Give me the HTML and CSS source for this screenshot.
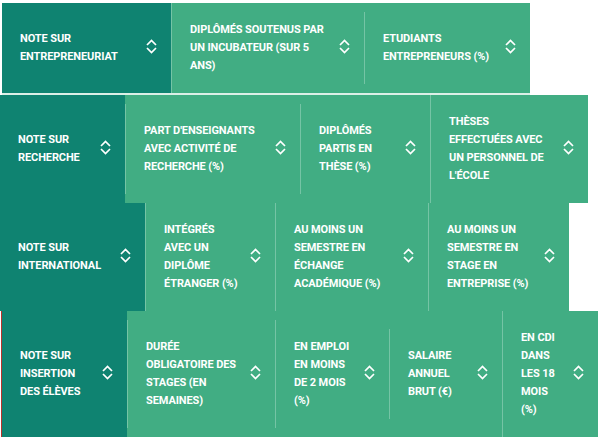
FILE: index.html
```html
<!DOCTYPE html>
<html lang="fr">
<head>
  <meta charset="UTF-8" />
  <title>Classement - tri des colonnes</title>
  <link rel="stylesheet" href="styles.css">
</head>
<body>
  <div class="strip strip-entrepreneuriat">
    <div class="head head-main"><span class="label">Note sur<br>entrepreneuriat</span><svg class="sort" viewBox="0 0 11 16"><path d="M1 7 L5.5 2.5 L10 7 M1 10 L5.5 14.5 L10 10"/></svg></div>
    <div class="head"><span class="label">Diplômés soutenus par<br>un incubateur (sur 5<br>ans)</span><svg class="sort" viewBox="0 0 11 16"><path d="M1 7 L5.5 2.5 L10 7 M1 10 L5.5 14.5 L10 10"/></svg></div>
    <div class="head"><span class="label">Etudiants<br>entrepreneurs (%)</span><svg class="sort" viewBox="0 0 11 16"><path d="M1 7 L5.5 2.5 L10 7 M1 10 L5.5 14.5 L10 10"/></svg></div>
  </div>

  <div class="strip strip-recherche">
    <div class="head head-main"><span class="label">Note sur<br>recherche</span><svg class="sort" viewBox="0 0 11 16"><path d="M1 7 L5.5 2.5 L10 7 M1 10 L5.5 14.5 L10 10"/></svg></div>
    <div class="head"><span class="label">Part d'enseignants<br>avec activité de<br>recherche (%)</span><svg class="sort" viewBox="0 0 11 16"><path d="M1 7 L5.5 2.5 L10 7 M1 10 L5.5 14.5 L10 10"/></svg></div>
    <div class="head"><span class="label">Diplômés<br>partis en<br>thèse (%)</span><svg class="sort" viewBox="0 0 11 16"><path d="M1 7 L5.5 2.5 L10 7 M1 10 L5.5 14.5 L10 10"/></svg></div>
    <div class="head"><span class="label">Thèses<br>effectuées avec<br>un personnel de<br>l'école</span><svg class="sort" viewBox="0 0 11 16"><path d="M1 7 L5.5 2.5 L10 7 M1 10 L5.5 14.5 L10 10"/></svg></div>
  </div>

  <div class="strip strip-international">
    <div class="head head-main"><span class="label">Note sur<br>international</span><svg class="sort" viewBox="0 0 11 16"><path d="M1 7 L5.5 2.5 L10 7 M1 10 L5.5 14.5 L10 10"/></svg></div>
    <div class="head"><span class="label">Intégrés<br>avec un<br>diplôme<br>étranger (%)</span><svg class="sort" viewBox="0 0 11 16"><path d="M1 7 L5.5 2.5 L10 7 M1 10 L5.5 14.5 L10 10"/></svg></div>
    <div class="head"><span class="label">Au moins un<br>semestre en<br>échange<br>académique (%)</span><svg class="sort" viewBox="0 0 11 16"><path d="M1 7 L5.5 2.5 L10 7 M1 10 L5.5 14.5 L10 10"/></svg></div>
    <div class="head"><span class="label">Au moins un<br>semestre en<br>stage en<br>entreprise (%)</span><svg class="sort" viewBox="0 0 11 16"><path d="M1 7 L5.5 2.5 L10 7 M1 10 L5.5 14.5 L10 10"/></svg></div>
  </div>

  <div class="strip strip-insertion">
    <div class="head head-main"><span class="label">Note sur<br>insertion<br>des élèves</span><svg class="sort" viewBox="0 0 11 16"><path d="M1 7 L5.5 2.5 L10 7 M1 10 L5.5 14.5 L10 10"/></svg></div>
    <div class="head"><span class="label">Durée<br>obligatoire des<br>stages (en<br>semaines)</span><svg class="sort" viewBox="0 0 11 16"><path d="M1 7 L5.5 2.5 L10 7 M1 10 L5.5 14.5 L10 10"/></svg></div>
    <div class="head"><span class="label">En emploi<br>en moins<br>de 2 mois<br>(%)</span><svg class="sort" viewBox="0 0 11 16"><path d="M1 7 L5.5 2.5 L10 7 M1 10 L5.5 14.5 L10 10"/></svg></div>
    <div class="head"><span class="label">Salaire<br>annuel<br>brut (€)</span><svg class="sort" viewBox="0 0 11 16"><path d="M1 7 L5.5 2.5 L10 7 M1 10 L5.5 14.5 L10 10"/></svg></div>
    <div class="head"><span class="label">En CDI<br>dans<br>les 18<br>mois<br>(%)</span><svg class="sort" viewBox="0 0 11 16"><path d="M1 7 L5.5 2.5 L10 7 M1 10 L5.5 14.5 L10 10"/></svg></div>
  </div>
</body>
</html>
```

FILE: styles.css
```css
body {
  margin: 0;
  padding-top: 3px;
  background: #fff;
  font-family: Roboto, "Liberation Sans", sans-serif;
}
.strip {
  display: grid;
  width: max-content;
  align-items: center;
  background-color: #41ad83;
}
.strip-entrepreneuriat {
  grid-template-columns: 169px 193px 166px;
  margin-left: 2px;
  border-bottom: 2px solid #dcefe7;
}
.strip-recherche {
  grid-template-columns: 125px 175px 130px 158px;
}
.strip-international {
  grid-template-columns: 145px 130px 153px 141px;
}
.strip-insertion {
  grid-template-columns: 125px 148px 114px 113px 96px;
  margin-left: 1px;
  border-left: 1px solid #b8332c;
}
.head {
  display: flex;
  align-items: center;
  justify-content: space-between;
  padding: 18px 14px 18px 18px;
  border-left: 1px solid rgba(255, 255, 255, 0.28);
  color: #fff;
}
.head-main {
  align-self: stretch;
  background-color: #0f8371;
  border-left: none;
}
.label {
  font-size: 11px;
  font-weight: 700;
  line-height: 18px;
  text-transform: uppercase;
  letter-spacing: -0.1px;
}
.sort {
  flex: none;
  width: 11px;
  height: 16px;
  margin-bottom: 4px;
  fill: none;
  stroke: #fff;
  stroke-width: 1.7;
}
```
